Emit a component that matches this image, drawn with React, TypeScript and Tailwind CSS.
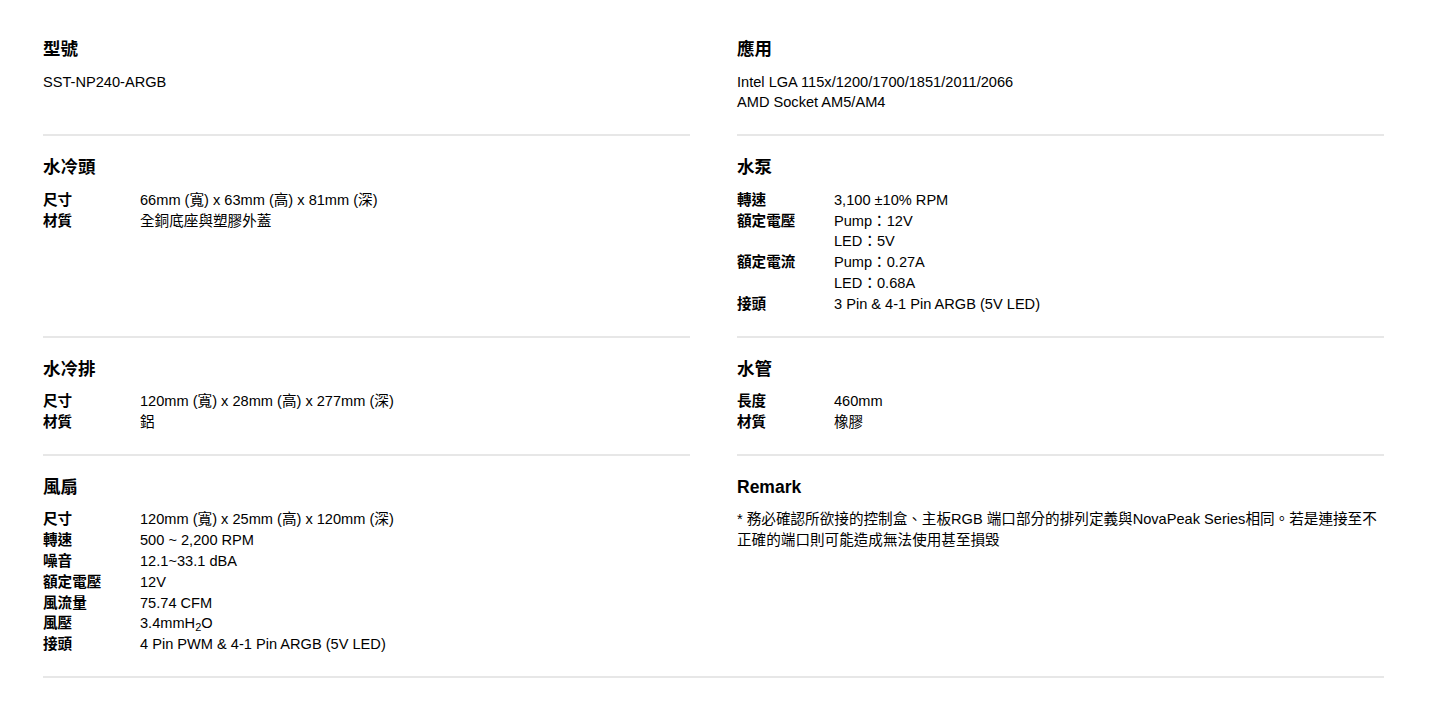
import React from "react";

type Row = { label: string; values: React.ReactNode[] };
type Section = { title: string; rows?: Row[]; text?: React.ReactNode[] };

const font = {
  fontFamily:
    '"Liberation Sans", Arial, Helvetica, "Noto Sans CJK TC", "Noto Sans CJK SC", sans-serif',
};

const sections: Section[] = [
  { title: "型號", text: ["SST-NP240-ARGB"] },
  {
    title: "應用",
    text: ["Intel LGA 115x/1200/1700/1851/2011/2066", "AMD Socket AM5/AM4"],
  },
  {
    title: "水冷頭",
    rows: [
      { label: "尺寸", values: ["66mm (寬) x 63mm (高) x 81mm (深)"] },
      { label: "材質", values: ["全銅底座與塑膠外蓋"] },
    ],
  },
  {
    title: "水泵",
    rows: [
      { label: "轉速", values: ["3,100 ±10% RPM"] },
      { label: "額定電壓", values: ["Pump：12V", "LED：5V"] },
      { label: "額定電流", values: ["Pump：0.27A", "LED：0.68A"] },
      { label: "接頭", values: ["3 Pin & 4-1 Pin ARGB (5V LED)"] },
    ],
  },
  {
    title: "水冷排",
    rows: [
      { label: "尺寸", values: ["120mm (寬) x 28mm (高) x 277mm (深)"] },
      { label: "材質", values: ["鋁"] },
    ],
  },
  {
    title: "水管",
    rows: [
      { label: "長度", values: ["460mm"] },
      { label: "材質", values: ["橡膠"] },
    ],
  },
  {
    title: "風扇",
    rows: [
      { label: "尺寸", values: ["120mm (寬) x 25mm (高) x 120mm (深)"] },
      { label: "轉速", values: ["500 ~ 2,200 RPM"] },
      { label: "噪音", values: ["12.1~33.1 dBA"] },
      { label: "額定電壓", values: ["12V"] },
      { label: "風流量", values: ["75.74 CFM"] },
      {
        label: "風壓",
        values: [
          <>
            3.4mmH<sub>2</sub>O
          </>,
        ],
      },
      { label: "接頭", values: ["4 Pin PWM & 4-1 Pin ARGB (5V LED)"] },
    ],
  },
  {
    title: "Remark",
    text: [
      "* 務必確認所欲接的控制盒、主板RGB 端口部分的排列定義與NovaPeak Series相同。若是連接至不正確的端口則可能造成無法使用甚至損毀",
    ],
  },
];

function SectionBlock({ s, last }: { s: Section; last: boolean }) {
  return (
    <div
      className={`pt-[20px] pb-[21px] ${
        last ? "" : "border-b-2 border-[#e7e7e7]"
      }`}
    >
      <h3 className="text-[17.5px] leading-[22px] font-bold text-black">
        {s.title}
      </h3>
      <div className="mt-[11.6px] text-[14.6px] leading-[20.8px] text-black">
        {s.text &&
          s.text.map((t, i) => (
            <p key={i} className="m-0">
              {t}
            </p>
          ))}
        {s.rows &&
          s.rows.map((r, i) => (
            <div key={i} className="flex">
              <div className="w-[97px] shrink-0 font-bold">{r.label}</div>
              <div className="flex flex-col">
                {r.values.map((v, j) => (
                  <div key={j}>{v}</div>
                ))}
              </div>
            </div>
          ))}
      </div>
    </div>
  );
}

export default function App() {
  return (
    <div className="min-h-screen bg-white" style={font}>
      <div className="pt-[18px] pl-[43px]">
        <div className="w-[1341px] grid grid-cols-[647px_647px] gap-x-[47px] border-b-2 border-[#e7e7e7]">
          {sections.map((s, i) => (
            <SectionBlock key={i} s={s} last={i >= sections.length - 2} />
          ))}
        </div>
      </div>
    </div>
  );
}
